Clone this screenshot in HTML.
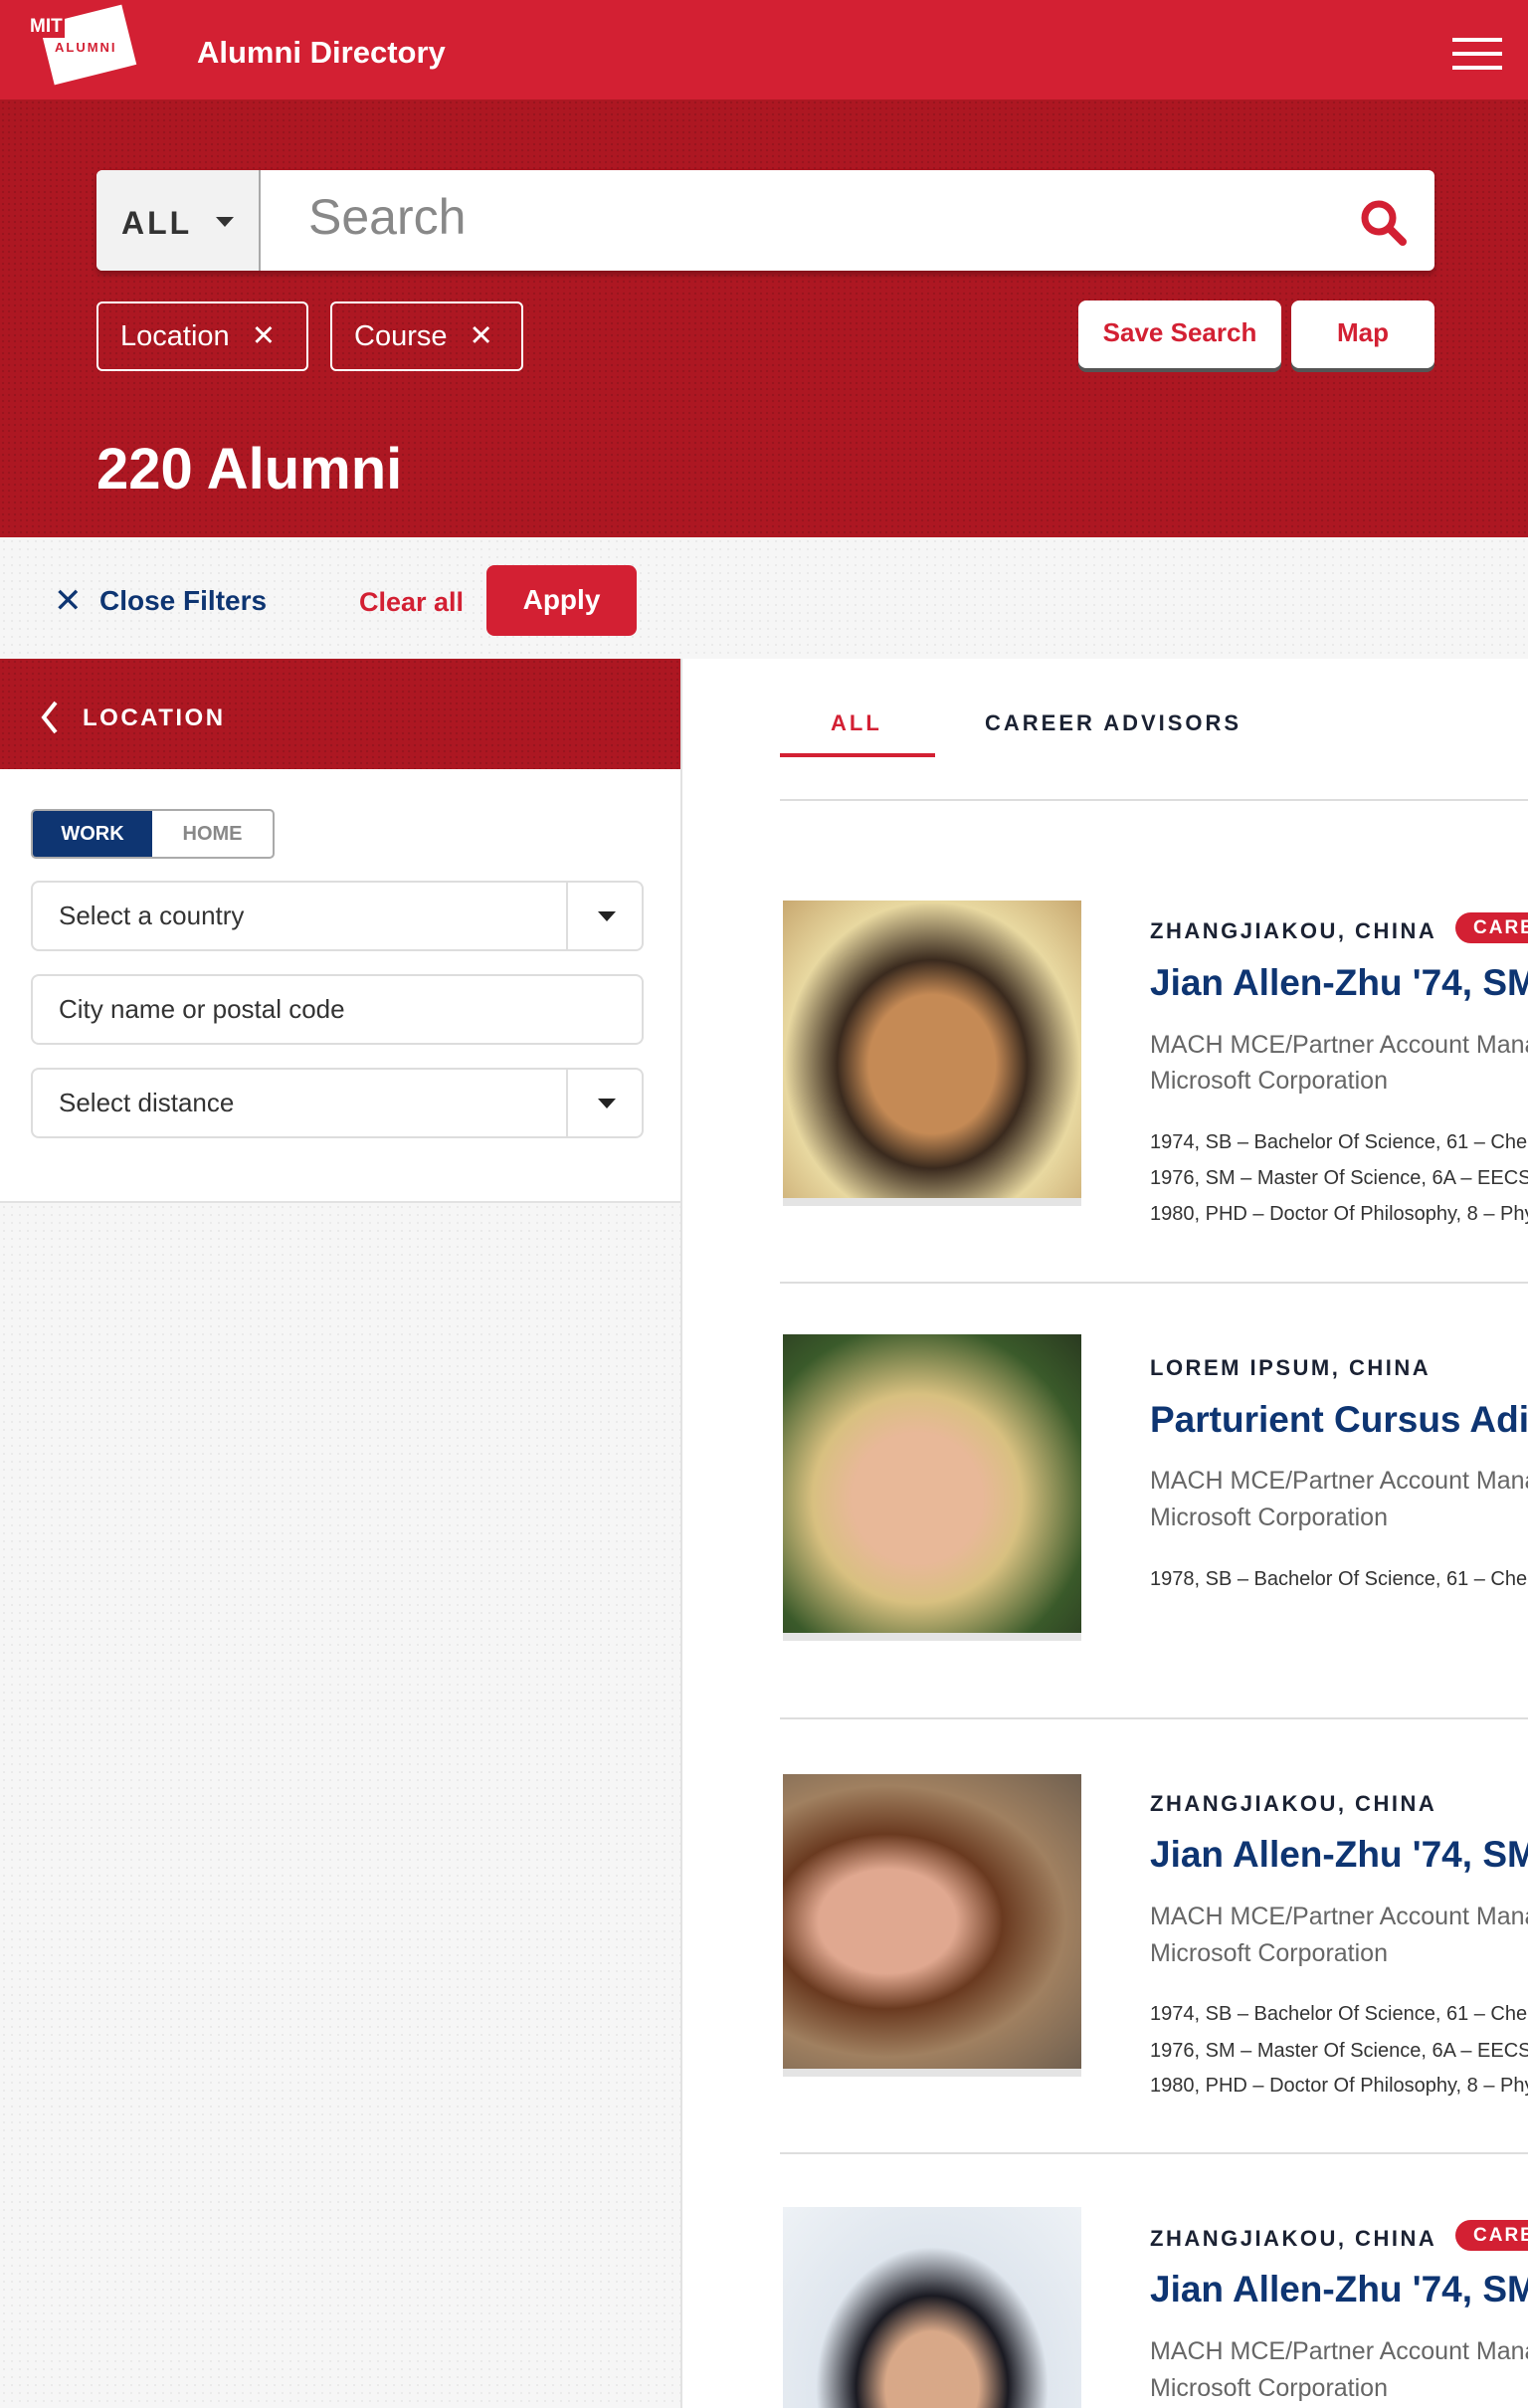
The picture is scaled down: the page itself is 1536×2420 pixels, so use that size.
<!DOCTYPE html>
<html style="overflow:hidden"><head><meta charset="utf-8"><style>
*{box-sizing:border-box;margin:0;padding:0}
html,body{width:1536px;height:2420px;overflow:hidden}
body{font-family:"Liberation Sans",Arial,sans-serif;background:#fff}
#w{position:relative;width:1536px;height:2420px;overflow:hidden}
.a{position:absolute;white-space:nowrap}
.dots{background-color:#ad1722;background-image:radial-gradient(rgba(0,0,0,.12) 1px,transparent 1.3px);background-size:6px 6px}
.gdots{background-color:#f6f6f6;background-image:radial-gradient(rgba(0,0,0,.05) 1px,transparent 1.3px);background-size:8px 8px}
.chip{border:2px solid #fff;border-radius:6px;color:#fff;font-size:29px;height:70px;line-height:66px;padding-left:22px}
.btn{background:#fff;border-radius:8px;color:#d32033;font-weight:bold;font-size:26px;text-align:center;line-height:64px;height:68px;box-shadow:0 4px 0 #555}
.inp{border:2px solid #ddd;border-radius:8px;height:71px;left:31px;width:616px;font-size:26px;color:#333;line-height:67px;padding-left:26px;background:#fff}
.dd{position:absolute;right:0;top:0;width:76px;height:67px;border-left:2px solid #ddd}
.dd:after{content:"";position:absolute;left:30px;top:29px;border-left:9px solid transparent;border-right:9px solid transparent;border-top:10px solid #222}
.loc{font-size:22px;font-weight:bold;letter-spacing:2.5px;color:#1b2233}
.nm{font-size:37px;font-weight:bold;color:#0e3572}
.tt{font-size:25px;color:#666}
.dg{font-size:20px;color:#333}
.ph{position:absolute;left:787px;width:300px;border-bottom:8px solid #e4e4e4}
.hr{position:absolute;left:784px;right:0;height:2px;background:#ddd}
.badge{position:absolute;left:1463px;width:120px;height:31px;border-radius:16px;background:#d32033;color:#fff;font-weight:bold;font-size:19px;letter-spacing:2px;line-height:31px;padding-left:18px}
</style></head><body><div id="w">
<div class="a" style="left:0;top:0;width:1536px;height:100px;background:#d32033"></div>
<div class="a" style="left:46px;top:14px;width:85px;height:62px;background:#fff;transform:rotate(-14deg)"></div>
<div class="a" style="left:28px;top:16px;color:#fff;font-weight:bold;font-size:19px;background:#d32033;padding:0 2px">MIT</div>
<div class="a" style="left:55px;top:40px;color:#d32033;font-weight:bold;font-size:13px;letter-spacing:2px">ALUMNI</div>
<div class="a" style="left:198px;top:35px;color:#fff;font-weight:bold;font-size:31px">Alumni Directory</div>
<div class="a" style="left:1460px;top:38px;width:50px;height:4px;background:#fff"></div>
<div class="a" style="left:1460px;top:52px;width:50px;height:4px;background:#fff"></div>
<div class="a" style="left:1460px;top:66px;width:50px;height:4px;background:#fff"></div>
<div class="a dots" style="left:0;top:100px;width:1536px;height:440px"></div>
<div class="a" style="left:97px;top:171px;width:1345px;height:101px;background:#fff;border-radius:6px;box-shadow:0 4px 6px rgba(0,0,0,.25);overflow:hidden">
 <div class="a" style="left:0;top:0;width:165px;height:101px;background:#f2f2f2;border-right:2px solid #aaa"></div>
 <div class="a" style="left:25px;top:35px;font-size:32px;font-weight:bold;letter-spacing:3px;color:#333">ALL</div>
 <div class="a" style="left:120px;top:47px;border-left:9px solid transparent;border-right:9px solid transparent;border-top:10px solid #333"></div>
 <div class="a" style="left:213px;top:18px;font-size:50px;color:#888">Search</div>
 <svg class="a" style="left:1269px;top:28px" width="50" height="50" viewBox="0 0 50 50"><circle cx="20" cy="20" r="14" fill="none" stroke="#d32033" stroke-width="7"/><line x1="31" y1="31" x2="44" y2="44" stroke="#d32033" stroke-width="8" stroke-linecap="round"/></svg>
</div>
<div class="a chip" style="left:97px;top:303px;width:213px">Location <span style="margin-left:14px">✕</span></div>
<div class="a chip" style="left:332px;top:303px;width:194px">Course <span style="margin-left:14px">✕</span></div>
<div class="a btn" style="left:1084px;top:302px;width:204px">Save Search</div>
<div class="a btn" style="left:1298px;top:302px;width:144px">Map</div>
<div class="a" style="left:97px;top:438px;color:#fff;font-weight:bold;font-size:58px">220 Alumni</div>
<div class="a gdots" style="left:0;top:540px;width:1536px;height:122px"></div>
<div class="a" style="left:54px;top:584px;color:#0e3572;font-size:34px">✕</div>
<div class="a" style="left:100px;top:588px;color:#0e3572;font-weight:bold;font-size:28px">Close Filters</div>
<div class="a" style="left:361px;top:590px;color:#d32033;font-weight:bold;font-size:27px">Clear all</div>
<div class="a" style="left:489px;top:568px;width:151px;height:71px;background:#d32033;border-radius:8px;color:#fff;font-weight:bold;font-size:28px;text-align:center;line-height:69px">Apply</div>
<div class="a gdots" style="left:0;top:1209px;width:684px;height:1211px"></div>
<div class="a" style="left:684px;top:662px;width:2px;height:1758px;background:#e2e2e2"></div>
<div class="a dots" style="left:0;top:662px;width:684px;height:111px"></div>
<svg class="a" style="left:38px;top:703px" width="24" height="36" viewBox="0 0 24 36"><polyline points="18,3 6,18 18,33" fill="none" stroke="#fff" stroke-width="4"/></svg>
<div class="a" style="left:83px;top:708px;color:#fff;font-weight:bold;font-size:24px;letter-spacing:2.5px">LOCATION</div>
<div class="a" style="left:0;top:1207px;width:684px;height:2px;background:#e2e2e2"></div>
<div class="a" style="left:31px;top:813px;width:245px;height:50px;border:2px solid #aaa;border-radius:5px;overflow:hidden">
 <div class="a" style="left:0;top:0;width:120px;height:46px;background:#0e3572;color:#fff;font-weight:bold;font-size:20px;text-align:center;line-height:46px">WORK</div>
 <div class="a" style="left:120px;top:0;width:121px;height:46px;color:#888;font-weight:bold;font-size:20px;text-align:center;line-height:46px">HOME</div>
</div>
<div class="a inp" style="top:885px">Select a country<div class="dd"></div></div>
<div class="a inp" style="top:979px">City name or postal code</div>
<div class="a inp" style="top:1073px">Select distance<div class="dd"></div></div>
<div class="a" style="left:835px;top:714px;color:#d32033;font-weight:bold;font-size:22px;letter-spacing:3px">ALL</div>
<div class="a" style="left:990px;top:714px;color:#1b2233;font-weight:bold;font-size:22px;letter-spacing:3px">CAREER ADVISORS</div>
<div class="a" style="left:784px;top:757px;width:156px;height:4px;background:#d32033"></div>
<div class="hr" style="top:803px"></div>

<div class="ph" style="top:905px;height:307px;background:radial-gradient(ellipse at 50% 55%,#c58a55 0 30%,#3a2a1e 45%,#e8d8a0 70%,#c8a870)"></div>
<div class="a loc" style="left:1156px;top:923px">ZHANGJIAKOU, CHINA</div>
<div class="badge" style="top:917px">CAREER</div>
<div class="a nm" style="left:1156px;top:967px">Jian Allen-Zhu '74, SM '76</div>
<div class="a tt" style="left:1156px;top:1036px">MACH MCE/Partner Account Manager</div>
<div class="a tt" style="left:1156px;top:1072px">Microsoft Corporation</div>
<div class="a dg" style="left:1156px;top:1137px">1974, SB – Bachelor Of Science, 61 – Chemistry</div>
<div class="a dg" style="left:1156px;top:1173px">1976, SM – Master Of Science, 6A – EECS</div>
<div class="a dg" style="left:1156px;top:1209px">1980, PHD – Doctor Of Philosophy, 8 – Physics</div>
<div class="hr" style="top:1288px"></div>

<div class="ph" style="top:1341px;height:308px;background:radial-gradient(ellipse at 45% 55%,#e8b898 0 28%,#d8c080 45%,#3a5a2a 75%,#2a3a20)"></div>
<div class="a loc" style="left:1156px;top:1362px">LOREM IPSUM, CHINA</div>
<div class="a nm" style="left:1156px;top:1406px">Parturient Cursus Adipiscing</div>
<div class="a tt" style="left:1156px;top:1474px">MACH MCE/Partner Account Manager</div>
<div class="a tt" style="left:1156px;top:1511px">Microsoft Corporation</div>
<div class="a dg" style="left:1156px;top:1576px">1978, SB – Bachelor Of Science, 61 – Chemistry</div>
<div class="hr" style="top:1726px"></div>

<div class="ph" style="top:1783px;height:304px;background:radial-gradient(ellipse at 35% 50%,#e0a890 0 25%,#6a3a20 42%,#a08060 65%,#706050)"></div>
<div class="a loc" style="left:1156px;top:1800px">ZHANGJIAKOU, CHINA</div>
<div class="a nm" style="left:1156px;top:1843px">Jian Allen-Zhu '74, SM '76</div>
<div class="a tt" style="left:1156px;top:1912px">MACH MCE/Partner Account Manager</div>
<div class="a tt" style="left:1156px;top:1949px">Microsoft Corporation</div>
<div class="a dg" style="left:1156px;top:2013px">1974, SB – Bachelor Of Science, 61 – Chemistry</div>
<div class="a dg" style="left:1156px;top:2050px">1976, SM – Master Of Science, 6A – EECS</div>
<div class="a dg" style="left:1156px;top:2085px">1980, PHD – Doctor Of Philosophy, 8 – Physics</div>
<div class="hr" style="top:2163px"></div>

<div class="ph" style="top:2218px;height:202px;border:none;background:radial-gradient(ellipse at 50% 90%,#d8a888 0 22%,#1a1a22 36%,#dfe6ee 55%,#eef2f6)"></div>
<div class="a loc" style="left:1156px;top:2237px">ZHANGJIAKOU, CHINA</div>
<div class="badge" style="top:2231px">CAREER</div>
<div class="a nm" style="left:1156px;top:2280px">Jian Allen-Zhu '74, SM '76</div>
<div class="a tt" style="left:1156px;top:2349px">MACH MCE/Partner Account Manager</div>
<div class="a tt" style="left:1156px;top:2386px">Microsoft Corporation</div>
</div></body></html>
